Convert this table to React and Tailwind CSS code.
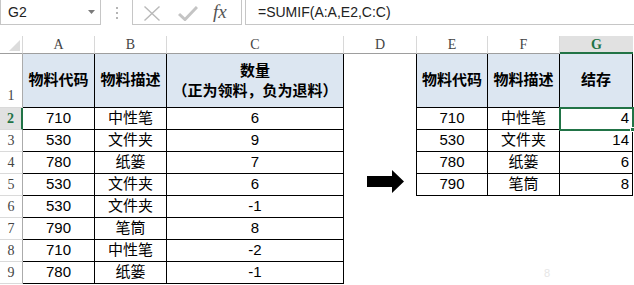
import React from "react";

const FONT = { fontFamily: '"Liberation Sans", "Noto Sans CJK SC", sans-serif' };
const HEAD_FONT = { fontFamily: '"Liberation Serif", "DejaVu Serif", serif' };

const widths = ["w-[23px]", "w-[72px]", "w-[72px]", "w-[177px]", "w-[73px]", "w-[71px]", "w-[72px]", "w-[73px]"];

const left = [
  ["710", "中性笔", "6"],
  ["530", "文件夹", "9"],
  ["780", "纸篓", "7"],
  ["530", "文件夹", "6"],
  ["530", "文件夹", "-1"],
  ["790", "笔筒", "8"],
  ["710", "中性笔", "-2"],
  ["780", "纸篓", "-1"],
];

const right = [
  ["710", "中性笔", "4"],
  ["530", "文件夹", "14"],
  ["780", "纸篓", "6"],
  ["790", "笔筒", "8"],
];

function FormulaBar() {
  return (
    <div className="flex h-[25px] bg-white" style={FONT}>
      <div className="relative flex w-[101px] items-center border border-t-0 border-[#c6c6c6] pl-[7px] text-[14px] text-[#222]">
        G2
        <svg className="absolute left-[87px] top-[10px]" width="7" height="5" viewBox="0 0 7 5">
          <path d="M0 0 H7 L3.5 4 Z" fill="#7a7a7a" />
        </svg>
      </div>
      <div className="flex w-[31px] flex-col items-center justify-center gap-[3px]">
        <span className="h-[2px] w-[2px] bg-[#b5b5b5]" />
        <span className="h-[2px] w-[2px] bg-[#b5b5b5]" />
        <span className="h-[2px] w-[2px] bg-[#b5b5b5]" />
      </div>
      <div className="relative w-[110px] border border-t-0 border-[#c6c6c6]">
        <svg className="absolute left-[10px] top-[6px]" width="18" height="15" viewBox="0 0 18 15">
          <path d="M1.5 0.5 L16.5 14.5 M16.5 0.5 L1.5 14.5" stroke="#b9b9b9" strokeWidth="1.4" fill="none" />
        </svg>
        <svg className="absolute left-[45px] top-[6px]" width="20" height="15" viewBox="0 0 20 15">
          <path d="M1 8 L7 13.5 L19 1" stroke="#c4c4c4" strokeWidth="3" fill="none" />
        </svg>
        <span
          className="absolute left-[80px] top-[0px] text-[19px] italic text-[#555]"
          style={{ fontFamily: '"Liberation Serif", serif', lineHeight: "24px" }}
        >
          fx
        </span>
      </div>
      <div className="ml-[3px] flex flex-1 items-center border-b border-l border-[#c6c6c6] pl-[12px] text-[14px] text-[#222]">
        =SUMIF(A:A,E2,C:C)
      </div>
    </div>
  );
}

function HeaderRow() {
  const letters = ["A", "B", "C", "D", "E", "F", "G"];
  return (
    <div className="flex h-[18px]" style={HEAD_FONT}>
      <div className={`${widths[0]} relative box-border border-b border-r border-b-[#9e9e9e] border-r-[#d8d8d8]`}>
        <svg className="absolute left-[9px] top-[4px]" width="11" height="11" viewBox="0 0 11 11">
          <path d="M11 0 V11 H0 Z" fill="#dcdcdc" />
        </svg>
      </div>
      {letters.map((l, i) => {
        const sel = l === "G";
        return (
          <div
            key={l}
            className={`${widths[i + 1]} box-border flex items-center justify-center text-[14px] ${
              sel
                ? "border-b-2 border-b-[#217346] bg-[#e1e1e1] font-bold text-[#217346]"
                : "border-b border-r border-b-[#9e9e9e] border-r-[#d8d8d8] text-[#444]"
            }`}
          >
            {l}
          </div>
        );
      })}
    </div>
  );
}

function RowNum({ n, sel, tall }) {
  return (
    <div
      className={`${widths[0]} box-border flex justify-center border-b border-b-[#dadada] text-[14px] ${
        tall ? "items-end pb-[1px]" : "items-center"
      } ${sel ? "border-r-2 border-r-[#217346] bg-[#e1e1e1] font-bold text-[#217346]" : "border-r border-r-[#ababab] text-[#444]"}`}
      style={HEAD_FONT}
    >
      {n}
    </div>
  );
}

function Cell({ w, children, boxed, head, align = "center", extra = "" }) {
  const justify = align === "right" ? "justify-end pr-[3px]" : "justify-center";
  return (
    <div
      className={`${w} box-border flex items-center ${justify} ${
        boxed ? "border-b border-r border-black" : ""
      } ${head ? "bg-[#dce6f1] font-bold" : ""} ${extra}`}
    >
      {children}
    </div>
  );
}

export default function App() {
  return (
    <div className="h-[285px] w-[634px] overflow-hidden bg-white text-black">
      <FormulaBar />
      <div className="h-[11px]" />
      <HeaderRow />
      <div className="relative text-[15px]" style={FONT}>
        {/* row 1: headers of both tables */}
        <div className="flex h-[54px]">
          <RowNum n="1" tall />
          <Cell w={widths[1]} boxed head>物料代码</Cell>
          <Cell w={widths[2]} boxed head>物料描述</Cell>
          <Cell w={widths[3]} boxed head>
            <div className="flex flex-col items-center leading-[20px]">
              <span>数量</span>
              <span>（正为领料，负为退料）</span>
            </div>
          </Cell>
          <Cell w={widths[4]} extra="border-r border-black" />
          <Cell w={widths[5]} boxed head>物料代码</Cell>
          <Cell w={widths[6]} boxed head>物料描述</Cell>
          <Cell w={widths[7]} boxed head>结存</Cell>
        </div>
        {left.map((r, i) => {
          const rr = right[i];
          return (
            <div key={i} className="flex h-[22px]">
              <RowNum n={i + 2} sel={i === 0} />
              <Cell w={widths[1]} boxed>{r[0]}</Cell>
              <Cell w={widths[2]} boxed>{r[1]}</Cell>
              <Cell w={widths[3]} boxed>{r[2]}</Cell>
              <Cell w={widths[4]} extra={rr ? "border-r border-black" : ""} />
              <Cell w={widths[5]} boxed={!!rr}>{rr && rr[0]}</Cell>
              <Cell w={widths[6]} boxed={!!rr}>
                {rr ? rr[1] : i === 7 ? (
                  <span className="ml-[46px] text-[11px] text-[#e6e6e6]">8</span>
                ) : null}
              </Cell>
              <Cell w={widths[7]} boxed={!!rr} align="right">{rr && rr[2]}</Cell>
            </div>
          );
        })}

        {/* active cell outline on G2 */}
        <div className="pointer-events-none absolute left-[559px] top-[53px] h-[24px] w-[75px] border-2 border-[#217346]" />
        <div className="pointer-events-none absolute left-[630px] top-[73px] h-[5px] w-[5px] border border-white bg-[#217346]" />

        {/* block arrow between the two tables */}
        <svg className="absolute left-[367px] top-[116px]" width="38" height="24" viewBox="0 0 38 24">
          <path d="M0 6 H25 V0 L37 11.5 L25 23 V17 H0 Z" fill="#000" />
        </svg>
      </div>
    </div>
  );
}
